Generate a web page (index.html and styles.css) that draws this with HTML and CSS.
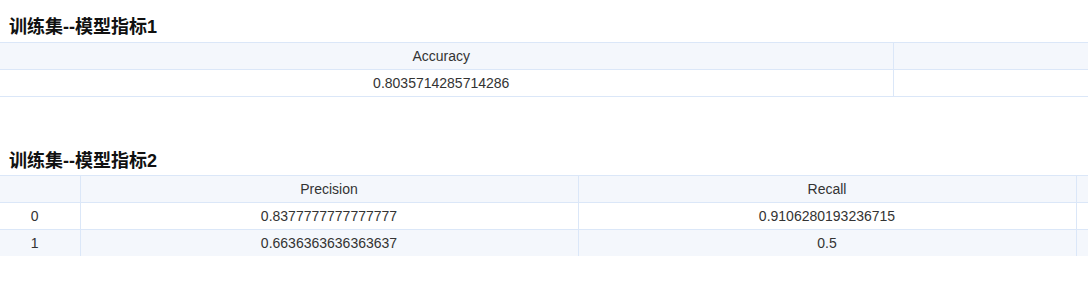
FILE: index.html
```html
<!DOCTYPE html>
<html lang="zh-CN">
<head>
<meta charset="utf-8">
<title>训练集模型指标</title>
<link rel="stylesheet" href="styles.css">
</head>
<body>
<div class="page">
  <section class="block block-first">
    <h3 class="title">训练集--模型指标1</h3>
    <div class="table-wrap">
      <table class="grid grid-one">
        <colgroup><col class="c-acc"><col class="c-rest"></colgroup>
        <thead><tr><th>Accuracy</th><th></th></tr></thead>
        <tbody><tr><td>0.8035714285714286</td><td></td></tr></tbody>
      </table>
    </div>
  </section>
  <section class="block block-second">
    <h3 class="title">训练集--模型指标2</h3>
    <div class="table-wrap">
      <table class="grid grid-two">
        <colgroup><col class="c-idx"><col class="c-metric"><col class="c-metric"><col class="c-metric"></colgroup>
        <thead><tr><th></th><th>Precision</th><th>Recall</th><th></th></tr></thead>
        <tbody>
          <tr><td>0</td><td>0.8377777777777777</td><td>0.9106280193236715</td><td></td></tr>
          <tr class="stripe last"><td>1</td><td>0.6636363636363637</td><td>0.5</td><td></td></tr>
        </tbody>
      </table>
    </div>
  </section>
</div>
</body>
</html>
```
FILE: styles.css
```css
html, body {
  margin: 0;
  padding: 0;
  background: #ffffff;
}
.page {
  width: 1088px;
  overflow: hidden;
  font-family: "Liberation Sans", Arial, "Noto Sans CJK SC", sans-serif;
  color: #333333;
}
.block-first {
  padding-top: 15px;
}
.block-second {
  padding-top: 52px;
}
.title {
  margin: 0 0 3px 0;
  padding-left: 9px;
  font-size: 18px;
  line-height: 24px;
  font-weight: bold;
  color: #111111;
  font-family: "Liberation Sans", Arial, "Noto Sans CJK SC", sans-serif;
}
.block-second .title {
  margin-bottom: 2px;
}
.table-wrap {
  width: 1088px;
  overflow: hidden;
}
.grid {
  border-collapse: collapse;
  table-layout: fixed;
  font-size: 14px;
}
.grid-one { width: 1786px; }
.grid-two { width: 1574px; }
.c-acc { width: 893px; }
.c-rest { width: 893px; }
.c-idx { width: 80px; }
.c-metric { width: 498px; }
.grid th,
.grid td {
  height: 26px;
  padding: 0 8px;
  text-align: center;
  vertical-align: middle;
  font-weight: normal;
  border: 1px solid #dbe7f8;
  line-height: 16px;
  color: #333333;
  white-space: nowrap;
}
.grid tr > :first-child {
  border-left: none;
  padding: 0 13px 0 3px;
}
.grid thead th {
  background: #f4f7fc;
}
.grid tbody tr.stripe td {
  background: #f4f7fc;
}
.grid tbody tr.last td {
  border-bottom: none;
}
```
